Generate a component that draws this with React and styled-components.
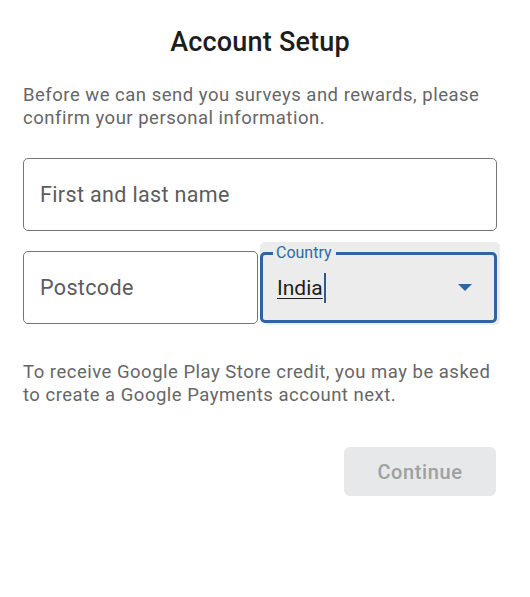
import React from 'react';
import styled, { createGlobalStyle } from 'styled-components';

const GlobalStyle = createGlobalStyle`
  body {
    margin: 0;
    background: #fff;
    font-family: Roboto, "Liberation Sans", sans-serif;
  }
`;

const Page = styled.div`
  width: 530px;
  height: 597px;
  box-sizing: border-box;
  padding: 27px 33px 0 23px;
  display: flex;
  flex-direction: column;
`;

const Title = styled.h1`
  margin: 0;
  font-size: 27px;
  line-height: 31px;
  font-weight: 500;
  letter-spacing: 0.2px;
  color: #1d1d1d;
  text-align: center;
`;

const Note = styled.p`
  margin: ${(p) => p.$top}px 0 0;
  font-size: 18.5px;
  line-height: 23px;
  letter-spacing: 0.5px;
  color: #666;
`;

const TextInput = styled.input`
  display: block;
  width: 100%;
  box-sizing: border-box;
  height: 73px;
  margin: 0;
  padding: 0 16px;
  border: 1px solid #757575;
  border-radius: 5px;
  background: #fff;
  font-family: inherit;
  font-size: 21.5px;
  letter-spacing: 0.35px;
  color: #222;
  outline: none;

  &::placeholder {
    color: #5c5c5c;
  }
`;

const NameField = styled.div`
  margin-top: 28px;
`;

const Row = styled.div`
  margin-top: 20px;
  display: grid;
  grid-template-columns: 235px 1fr;
  column-gap: 2px;
  align-items: end;
`;

const SelectBox = styled.div`
  position: relative;
  height: 71px;
  box-sizing: border-box;
  border: 3px solid #2f649e;
  border-radius: 5px;
  background: #ececec;
  box-shadow: 0 -10px 0 0 #ececec, 3px -10px 0 0 #ececec, 3px 2px 0 0 #ececec;
  display: flex;
  align-items: center;
  padding: 0 22px 0 14px;
  margin-bottom: 1px;
`;

const FloatLabel = styled.span`
  position: absolute;
  top: -12px;
  left: 10px;
  padding: 0 4px 0 3px;
  background: #ececec;
  font-size: 16px;
  line-height: 19px;
  color: #2f6aa8;
`;

const Value = styled.span`
  font-size: 21px;
  color: #1e1e1e;
  text-decoration: underline;
  text-underline-offset: 3px;
  text-decoration-thickness: 1px;
`;

const Caret = styled.span`
  display: inline-block;
  width: 2px;
  height: 30px;
  margin-left: 1px;
  background: #2c5b8f;
`;

const Arrow = styled.span`
  margin-left: auto;
  width: 0;
  height: 0;
  border-left: 7px solid transparent;
  border-right: 7px solid transparent;
  border-top: 7px solid #2f649e;
`;

const Actions = styled.div`
  margin-top: 40px;
  display: flex;
  justify-content: flex-end;
  padding-right: 1px;
`;

const ContinueButton = styled.button`
  width: 152px;
  height: 49px;
  border: none;
  border-radius: 6px;
  background: #e7e8e9;
  font-family: inherit;
  font-size: 20px;
  font-weight: 500;
  color: #a0a0a0;
  letter-spacing: 0.6px;
`;

export default function App() {
  return (
    <>
      <GlobalStyle />
      <Page>
        <Title>Account Setup</Title>
        <Note $top={26}>
          Before we can send you surveys and rewards, please confirm your personal information.
        </Note>
        <NameField>
          <TextInput placeholder="First and last name" />
        </NameField>
        <Row>
          <TextInput placeholder="Postcode" />
          <SelectBox>
            <FloatLabel>Country</FloatLabel>
            <Value>India</Value>
            <Caret />
            <Arrow />
          </SelectBox>
        </Row>
        <Note $top={37}>
          To receive Google Play Store credit, you may be asked to create a Google Payments account next.
        </Note>
        <Actions>
          <ContinueButton disabled>Continue</ContinueButton>
        </Actions>
      </Page>
    </>
  );
}
